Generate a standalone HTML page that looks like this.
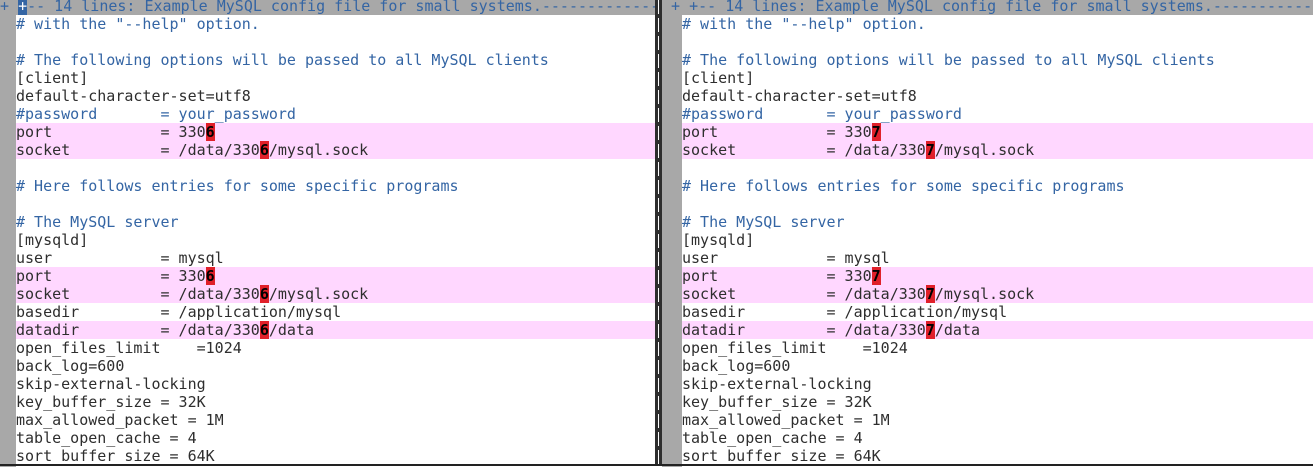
<!DOCTYPE html>
<html><head><meta charset="utf-8"><style>
body{margin:0;width:1313px;height:466px;overflow:hidden;background:#fff;position:relative;font-family:"DejaVu Sans Mono","Liberation Mono",monospace;font-size:15px;}
.pane{position:absolute;top:-3px;height:470px;overflow:hidden}
.g{position:absolute;top:0;bottom:0;background:#a8a8a8}
.l{height:18px;line-height:18px;white-space:pre;color:#2e2e2e}
.c{color:#3465a4}
.d{background:#ffd7ff}
.h{background:#e0202a;color:#000;font-weight:bold}
.f{background:#a8a8a8;color:#3465a4}
.fp{background:#3465a4;color:#fff}
#div{position:absolute;left:655px;top:0;width:7px;height:466px;background:#2e2e2e}
#div:after{content:"";position:absolute;left:3px;top:0;width:1px;height:466px;background:repeating-linear-gradient(#fff 0 14px,#2e2e2e 14px 18px)}
#bot{position:absolute;left:0;top:464px;width:1313px;height:2px;background:#222}
</style></head><body>
<div class="pane" style="left:0;width:655px">
<div class="g" style="left:0;width:16px"></div>
<div style="position:absolute;left:16px;top:0;width:639px">
<div class="l f" style="margin-left:-16px;width:655px;overflow:hidden">+ <span class="fp">+</span>-- 14 lines: Example MySQL config file for small systems.----------------------------------------------</div>
<div class="l c"># with the "--help" option.</div>
<div class="l"> </div>
<div class="l c"># The following options will be passed to all MySQL clients</div>
<div class="l">[client]</div>
<div class="l">default-character-set=utf8</div>
<div class="l c">#password       = your_password</div>
<div class="l d">port            = 330<span class="h">6</span></div>
<div class="l d">socket          = /data/330<span class="h">6</span>/mysql.sock</div>
<div class="l"> </div>
<div class="l c"># Here follows entries for some specific programs</div>
<div class="l"> </div>
<div class="l c"># The MySQL server</div>
<div class="l">[mysqld]</div>
<div class="l">user            = mysql</div>
<div class="l d">port            = 330<span class="h">6</span></div>
<div class="l d">socket          = /data/330<span class="h">6</span>/mysql.sock</div>
<div class="l">basedir         = /application/mysql</div>
<div class="l d">datadir         = /data/330<span class="h">6</span>/data</div>
<div class="l">open_files_limit    =1024</div>
<div class="l">back_log=600</div>
<div class="l">skip-external-locking</div>
<div class="l">key_buffer_size = 32K</div>
<div class="l">max_allowed_packet = 1M</div>
<div class="l">table_open_cache = 4</div>
<div class="l">sort_buffer_size = 64K</div>
</div></div>
<div id="div"></div>
<div class="pane" style="left:662px;width:651px">
<div class="g" style="left:0;width:20px"></div>
<div style="position:absolute;left:20px;top:0;width:631px">
<div class="l f" style="margin-left:-20px;width:651px;overflow:hidden"> + +-- 14 lines: Example MySQL config file for small systems.----------------------------------------------</div>
<div class="l c"># with the "--help" option.</div>
<div class="l"> </div>
<div class="l c"># The following options will be passed to all MySQL clients</div>
<div class="l">[client]</div>
<div class="l">default-character-set=utf8</div>
<div class="l c">#password       = your_password</div>
<div class="l d">port            = 330<span class="h">7</span></div>
<div class="l d">socket          = /data/330<span class="h">7</span>/mysql.sock</div>
<div class="l"> </div>
<div class="l c"># Here follows entries for some specific programs</div>
<div class="l"> </div>
<div class="l c"># The MySQL server</div>
<div class="l">[mysqld]</div>
<div class="l">user            = mysql</div>
<div class="l d">port            = 330<span class="h">7</span></div>
<div class="l d">socket          = /data/330<span class="h">7</span>/mysql.sock</div>
<div class="l">basedir         = /application/mysql</div>
<div class="l d">datadir         = /data/330<span class="h">7</span>/data</div>
<div class="l">open_files_limit    =1024</div>
<div class="l">back_log=600</div>
<div class="l">skip-external-locking</div>
<div class="l">key_buffer_size = 32K</div>
<div class="l">max_allowed_packet = 1M</div>
<div class="l">table_open_cache = 4</div>
<div class="l">sort_buffer_size = 64K</div>
</div></div>
<div id="bot"></div>
</body></html>
